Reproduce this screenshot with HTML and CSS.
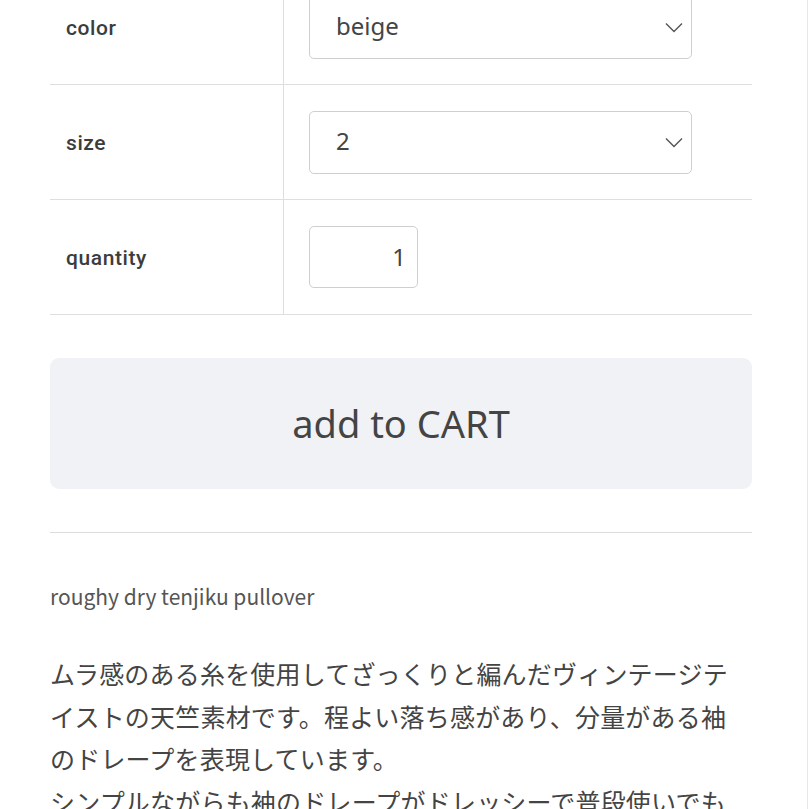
FILE: index.html
```html
<!DOCTYPE html>
<html lang="ja">
<head>
<meta charset="utf-8">
<title>roughy dry tenjiku pullover</title>
<link rel="stylesheet" href="styles.css">
</head>
<body>
<div class="page">
  <div class="options">
    <div class="opt-row">
      <div class="opt-label">color</div>
      <div class="opt-field">
        <div class="select">
          <span class="select-value">beige</span>
          <svg class="chev" width="18" height="11" viewBox="0 0 18 11"><path d="M1 1.5 L9 9.5 L17 1.5" fill="none" stroke="#555" stroke-width="1.4"/></svg>
        </div>
      </div>
    </div>
    <div class="opt-row">
      <div class="opt-label">size</div>
      <div class="opt-field">
        <div class="select">
          <span class="select-value">2</span>
          <svg class="chev" width="18" height="11" viewBox="0 0 18 11"><path d="M1 1.5 L9 9.5 L17 1.5" fill="none" stroke="#555" stroke-width="1.4"/></svg>
        </div>
      </div>
    </div>
    <div class="opt-row">
      <div class="opt-label">quantity</div>
      <div class="opt-field">
        <div class="qty">1</div>
      </div>
    </div>
  </div>

  <div class="cart-btn">add to CART</div>

  <div class="divider"></div>

  <p class="product-name">roughy dry tenjiku pullover</p>
  <p class="desc">ムラ感のある糸を使用してざっくりと編んだヴィンテージテイストの天竺素材です。程よい落ち感があり、分量がある袖のドレープを表現しています。<br>シンプルながらも袖のドレープがドレッシーで普段使いでも</p>
</div>
</body>
</html>
```

FILE: styles.css
```css
html, body {
  margin: 0;
  padding: 0;
  background: #fff;
}

body {
  font-family: "Noto Sans", "Noto Sans CJK JP", sans-serif;
  color: #333;
  overflow: hidden;
}

.page {
  width: 808px;
  min-height: 900px;
  border-right: 1px solid #e6e6e6;
  box-sizing: border-box;
  padding: 0 56px 0 50px;
  margin-top: -30px;
}

.options {
  display: flex;
  flex-direction: column;
  width: 702px;
}

.opt-row {
  display: grid;
  grid-template-columns: 234px 1fr;
  height: 115px;
  border-bottom: 1px solid #dedede;
  box-sizing: border-box;
}

.opt-label {
  display: flex;
  align-items: center;
  padding-left: 16px;
  border-right: 1px solid #dedede;
  font-family: Roboto, "Noto Sans", sans-serif;
  font-size: 21px;
  letter-spacing: 0.6px;
  font-weight: 500;
  color: #3c3c3c;
  padding-top: 2px;
}

.opt-field {
  display: flex;
  align-items: center;
  padding-left: 25px;
}

.select {
  position: relative;
  width: 383px;
  height: 63px;
  box-sizing: border-box;
  border: 1.5px solid #cfcfcf;
  border-radius: 5px;
  display: flex;
  align-items: center;
  padding-left: 26px;
  font-size: 24px;
  color: #444;
}

.select-value {
  line-height: 1;
  padding-bottom: 3px;
}

.chev {
  position: absolute;
  right: 8px;
  top: 25px;
}

.qty {
  width: 109px;
  height: 62px;
  box-sizing: border-box;
  border: 1.5px solid #cfcfcf;
  border-radius: 5px;
  display: flex;
  align-items: center;
  justify-content: flex-end;
  padding-right: 11px;
  font-size: 24px;
  color: #444;
  padding-bottom: 2px;
}

.cart-btn {
  margin-top: 43px;
  width: 702px;
  height: 131px;
  background: #f1f2f5;
  border-radius: 9px;
  display: flex;
  align-items: center;
  justify-content: center;
  font-size: 38px;
  color: #444;
  padding-bottom: 2px;
  box-sizing: border-box;
}

.divider {
  margin-top: 43px;
  width: 702px;
  border-top: 1.5px solid #dcdcdc;
}

.product-name {
  margin: 48px 0 0;
  font-family: "Noto Sans CJK JP", "Noto Sans", sans-serif;
  font-size: 21px;
  line-height: 30px;
  color: #555;
}

.desc {
  margin: 41px 0 0;
  width: 690px;
  font-family: "Noto Sans CJK JP", sans-serif;
  font-size: 25px;
  letter-spacing: 0.2px;
  line-height: 42.5px;
  color: #444;
}
```
